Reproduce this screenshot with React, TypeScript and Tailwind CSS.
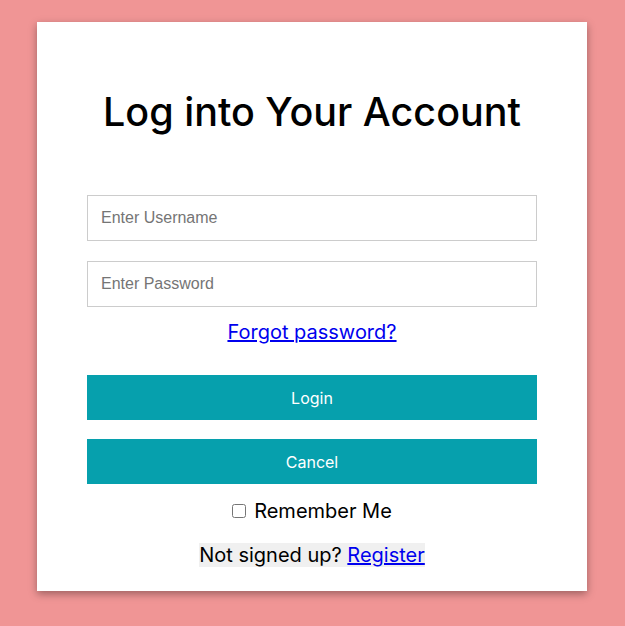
import React, { useState } from "react";

const App = () => {
  const [username, setUsername] = useState("");
  const [password, setPassword] = useState("");
  const [remember, setRemember] = useState(false);

  return (
    <div className="min-h-[626px] w-full bg-[#f09595] pt-[22px] font-['Inter',sans-serif]">
      <div className="ml-[37px] flex w-[550px] flex-col items-center bg-white px-[50px] pt-[66px] pb-[22px] shadow-[0_3px_8px_rgba(0,0,0,0.35)]">
        <h1 className="text-[39.5px] leading-[48px] font-medium text-black">
          Log into Your Account
        </h1>

        <input
          type="text"
          value={username}
          onChange={(e) => setUsername(e.target.value)}
          placeholder="Enter Username"
          className="mt-[59px] h-[46px] w-full border border-[#cccccc] px-[13px] font-['Liberation_Sans',Arial,sans-serif] text-base text-black outline-none placeholder:text-[#757575]"
        />
        <input
          type="password"
          value={password}
          onChange={(e) => setPassword(e.target.value)}
          placeholder="Enter Password"
          className="mt-[20px] h-[46px] w-full border border-[#cccccc] px-[13px] font-['Liberation_Sans',Arial,sans-serif] text-base text-black outline-none placeholder:text-[#757575]"
        />

        <a href="#" className="mt-[11px] text-[20px] leading-[28px] text-[#0000ee] underline">
          Forgot password?
        </a>

        <button className="mt-[29px] h-[45px] w-full bg-[#06a0ad] text-base text-white">
          Login
        </button>
        <button className="mt-[19px] h-[45px] w-full bg-[#06a0ad] text-base text-white">
          Cancel
        </button>

        <label className="mt-[13px] flex items-center text-[20px] leading-[28px] text-black">
          <input
            type="checkbox"
            checked={remember}
            onChange={(e) => setRemember(e.target.checked)}
            className="mr-[8px] h-[14px] w-[14px]"
          />
          Remember Me
        </label>

        <p className="mt-[16px] text-[20px] leading-[28px] text-black">
          <span className="bg-[#f0f0f0]">
            Not signed up?{" "}
            <a href="#" className="text-[#0000ee] underline">
              Register
            </a>
          </span>
        </p>
      </div>
    </div>
  );
};

export default App;
